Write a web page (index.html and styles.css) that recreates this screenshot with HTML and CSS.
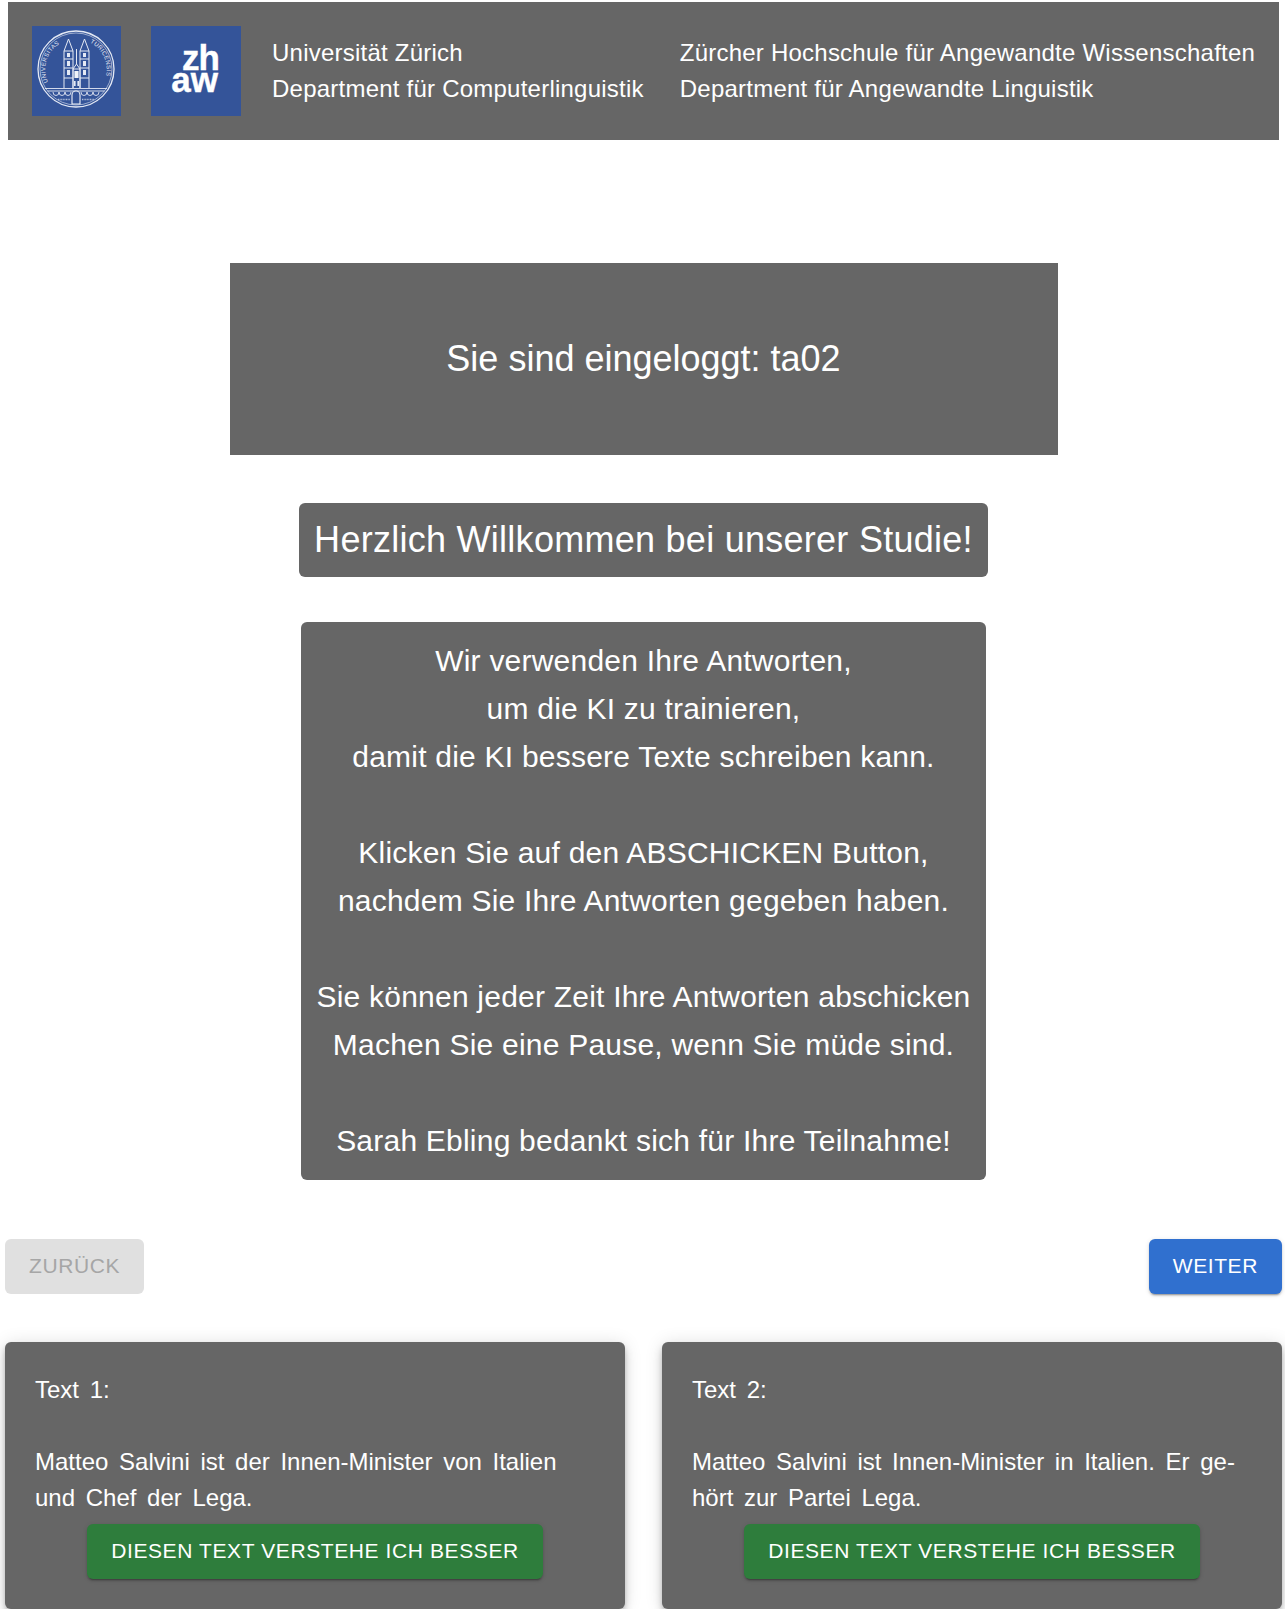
FILE: index.html
```html
<!DOCTYPE html>
<html lang="de">
<head>
  <meta charset="UTF-8">
  <meta name="viewport" content="width=device-width, initial-scale=1.0">
  <title>Studie</title>
  <link rel="stylesheet" href="styles.css">
</head>
<body>
  <header class="site-header">
    <div class="logo">
      <svg class="seal" viewBox="0 0 89 90" aria-label="Universität Zürich">
        <defs>
          <path id="seal-left" d="M16 56 A30 30 0 0 1 30 16.5"/>
          <path id="seal-right" d="M58 16.5 A30 30 0 0 1 72 56"/>
        </defs>
        <g fill="none" stroke="#e4e9f4">
          <circle cx="44" cy="43" r="38" stroke-width="1.3"/>
          <circle cx="44" cy="43" r="36" stroke-width=".6"/>
          <!-- towers -->
          <path d="M32 62V25L36.5 13L41 25V62M32 25H41M32 33H41M32 42H41M32 52H41" stroke-width="1"/>
          <path d="M48 62V25L52.5 13L57 25V62M48 25H57M48 33H57M48 42H57M48 52H57" stroke-width="1"/>
          <path d="M41 62V43H48V62M41 43L44.5 38L48 43M44.5 38V23" stroke-width="1"/>
          <!-- bridge -->
          <path d="M13 62.5H75M15.5 65H72.5" stroke-width=".9"/>
          <path d="M21 66a3 3.5 0 0 0 6 0a3 3.5 0 0 0 6 0a3 3.5 0 0 0 6 0M49 66a3 3.5 0 0 0 6 0a3 3.5 0 0 0 6 0a3 3.5 0 0 0 6 0" stroke-width=".9"/>
          <path d="M26 73.5H38M50 73.5H62" stroke-width="1.3" stroke-dasharray="1 .6" opacity=".7"/>
        </g>
        <path d="M40 69a4 4 0 0 1 8 0v9h-8z" fill="#345499" stroke="#f0f3f9" stroke-width="1.1"/>
        <rect x="42.4" y="45" width="4.2" height="7" fill="#f0f3f9"/>
        <g fill="#e4e9f4">
          <rect x="35" y="27" width="3" height="4"/>
          <rect x="51" y="27" width="3" height="4"/>
          <rect x="35" y="35" width="3" height="5"/>
          <rect x="51" y="35" width="3" height="5"/>
          <rect x="35" y="44" width="3" height="5"/>
          <rect x="51" y="44" width="3" height="5"/>
          <rect x="42" y="55" width="1.6" height="5"/>
          <rect x="45.4" y="55" width="1.6" height="5"/>
        </g>
        <text class="seal-text"><textPath href="#seal-left">UNIVERSITAS</textPath></text>
        <text class="seal-text"><textPath href="#seal-right">TURICENSIS</textPath></text>
      </svg>
    </div>
    <div class="logo logo-zhaw">
      <span class="zh">zh</span>
      <span>aw</span>
    </div>
    <div class="org">
      <p>Universität Zürich</p>
      <p>Department für Computerlinguistik</p>
    </div>
    <div class="org">
      <p>Zürcher Hochschule für Angewandte Wissenschaften</p>
      <p>Department für Angewandte Linguistik</p>
    </div>
  </header>

  <main>
    <div class="login-box">Sie sind eingeloggt: ta02</div>
    <h1 class="welcome">Herzlich Willkommen bei unserer Studie!</h1>
    <div class="intro">
      Wir verwenden Ihre Antworten,<br>
      um die KI zu trainieren,<br>
      damit die KI bessere Texte schreiben kann.<br>
      <br>
      Klicken Sie auf den ABSCHICKEN Button,<br>
      nachdem Sie Ihre Antworten gegeben haben.<br>
      <br>
      Sie können jeder Zeit Ihre Antworten abschicken<br>
      Machen Sie eine Pause, wenn Sie müde sind.<br>
      <br>
      Sarah Ebling bedankt sich für Ihre Teilnahme!
    </div>

    <div class="nav-row">
      <button class="btn btn-disabled" disabled>Zurück</button>
      <button class="btn btn-primary">Weiter</button>
    </div>

    <div class="cards">
      <section class="card">
        <p class="card-text">Text 1:<br><br>Matteo Salvini ist der Innen-Minister von Italien und Chef der Lega.</p>
        <button class="btn btn-success">Diesen Text verstehe ich besser</button>
      </section>
      <section class="card">
        <p class="card-text">Text 2:<br><br>Matteo Salvini ist Innen-Minister in Italien. Er ge&shy;hört zur Partei Lega.</p>
        <button class="btn btn-success">Diesen Text verstehe ich besser</button>
      </section>
    </div>
  </main>
</body>
</html>
```

FILE: styles.css
```css
body {
  margin: 0;
  padding: 2px 3px 0 5px;
  font-family: "Liberation Sans", Arial, sans-serif;
  background-color: #fff;
  color: #fff;
}

.site-header {
  display: flex;
  align-items: center;
  height: 138px;
  margin: 0 3px;
  padding-left: 24px;
  background-color: #666;
}

.logo {
  flex: none;
  width: 89px;
  height: 90px;
  margin-right: 30px;
  background-color: #345499;
}

.seal {
  display: block;
  width: 100%;
  height: 100%;
}

.seal-text {
  font-size: 6px;
  letter-spacing: .35px;
  fill: #e4e9f4;
}

.logo-zhaw {
  display: flex;
  flex-direction: column;
  align-items: flex-end;
  justify-content: center;
  width: 90px;
  margin-right: 31px;
  padding: 0 23px 5px 0;
  box-sizing: border-box;
  font-size: 35px;
  font-weight: 700;
  line-height: 22px;
  -webkit-text-stroke: .4px #fff;
}

.logo-zhaw .zh {
  margin-right: -1px;
  letter-spacing: -1px;
}

.org {
  margin-right: 36px;
  white-space: nowrap;
}

.org p {
  margin: 0;
  font-size: 24px;
  line-height: 36px;
  letter-spacing: .23px;
}

main {
  display: flex;
  flex-direction: column;
  align-items: center;
}

.login-box {
  width: 828px;
  margin-top: 123px;
  padding: 75px 0;
  background-color: #666;
  font-size: 36px;
  line-height: 42px;
  text-align: center;
}

.welcome {
  margin: 48px 0 0;
  padding: 16px 15px;
  border-radius: 6px;
  background-color: #666;
  font-size: 36px;
  font-weight: 400;
  line-height: 42px;
  letter-spacing: .27px;
}

.intro {
  margin-top: 45px;
  padding: 15px;
  border-radius: 6px;
  background-color: #666;
  font-size: 30px;
  line-height: 48px;
  letter-spacing: .22px;
  text-align: center;
}

.nav-row {
  display: flex;
  justify-content: space-between;
  align-self: stretch;
  margin-top: 59px;
}

.btn {
  padding: 8px 24px 10px;
  border: 0;
  border-radius: 6px;
  font-family: inherit;
  font-size: 21px;
  line-height: 37px;
  letter-spacing: .6px;
  text-transform: uppercase;
  color: #fff;
  box-shadow: 0 3px 1px -2px rgba(0, 0, 0, .2), 0 2px 2px 0 rgba(0, 0, 0, .14), 0 1px 5px 0 rgba(0, 0, 0, .12);
}

.btn-disabled {
  background-color: #e0e0e0;
  color: #a6a6a6;
  box-shadow: none;
}

.btn-primary {
  background-color: #3070cf;
}

.btn-success {
  background-color: #2e7d3c;
}

.cards {
  display: flex;
  justify-content: space-between;
  align-self: stretch;
  margin-top: 48px;
}

.card {
  display: flex;
  flex-direction: column;
  align-items: center;
  width: 620px;
  height: 267px;
  padding: 30px;
  box-sizing: border-box;
  border-radius: 6px;
  background-color: #666;
  box-shadow: 0 3px 5px -1px rgba(0, 0, 0, .2), 0 6px 10px 0 rgba(0, 0, 0, .14), 0 1px 18px 0 rgba(0, 0, 0, .12);
}

.card-text {
  align-self: stretch;
  margin: 0 0 8px;
  font-size: 24px;
  line-height: 36px;
  word-spacing: 4px;
  hyphens: manual;
}
```
